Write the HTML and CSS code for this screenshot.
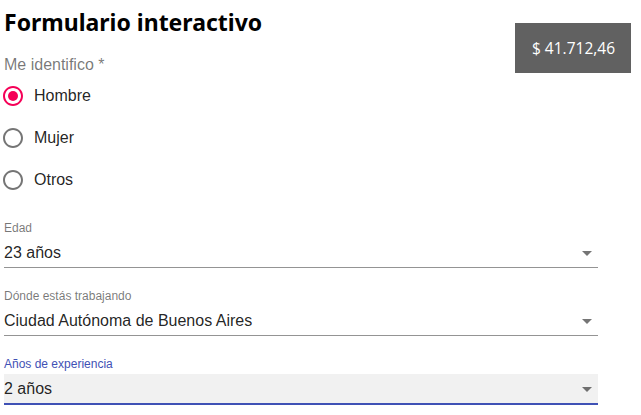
FILE: index.html
```html
<!DOCTYPE html>
<html lang="es">
<head>
<meta charset="utf-8">
<link rel="stylesheet" href="styles.css">
</head>
<body>
<div class="page">
  <div class="main">
    <h1 class="title">Formulario interactivo</h1>
    <div class="group-label">Me identifico *</div>
    <div class="radios">
      <label class="radio-row">
        <span class="radio-icon checked">
          <svg viewBox="0 0 24 24" width="24" height="24"><path d="M12 2C6.48 2 2 6.480 2 12s4.48 10 10 10 10-4.48 10-10S17.52 2 12 2zm0 18c-4.42 0-8-3.58-8-8s3.58-8 8-8 8 3.58 8 8-3.58 8-8 8z"/><circle cx="12" cy="12" r="5"/></svg>
        </span>
        <span class="radio-text">Hombre</span>
      </label>
      <label class="radio-row">
        <span class="radio-icon">
          <svg viewBox="0 0 24 24" width="24" height="24"><path d="M12 2C6.48 2 2 6.48 2 12s4.48 10 10 10 10-4.48 10-10S17.52 2 12 2zm0 18c-4.42 0-8-3.58-8-8s3.58-8 8-8 8 3.58 8 8-3.58 8-8 8z"/></svg>
        </span>
        <span class="radio-text">Mujer</span>
      </label>
      <label class="radio-row">
        <span class="radio-icon">
          <svg viewBox="0 0 24 24" width="24" height="24"><path d="M12 2C6.48 2 2 6.48 2 12s4.48 10 10 10 10-4.48 10-10S17.52 2 12 2zm0 18c-4.42 0-8-3.58-8-8s3.58-8 8-8 8 3.58 8 8-3.58 8-8 8z"/></svg>
        </span>
        <span class="radio-text">Otros</span>
      </label>
    </div>
    <div class="fields">
      <div class="field">
        <div class="field-label">Edad</div>
        <div class="field-box">
          <span class="field-value">23 años</span>
          <svg class="arrow" viewBox="0 0 24 24" width="24" height="24"><path d="M7 10l5 5 5-5z"/></svg>
        </div>
      </div>
      <div class="field">
        <div class="field-label">Dónde estás trabajando</div>
        <div class="field-box">
          <span class="field-value">Ciudad Autónoma de Buenos Aires</span>
          <svg class="arrow" viewBox="0 0 24 24" width="24" height="24"><path d="M7 10l5 5 5-5z"/></svg>
        </div>
      </div>
      <div class="field focused">
        <div class="field-label">Años de experiencia</div>
        <div class="field-box">
          <span class="field-value">2 años</span>
          <svg class="arrow" viewBox="0 0 24 24" width="24" height="24"><path d="M7 10l5 5 5-5z"/></svg>
        </div>
      </div>
    </div>
  </div>
  <div class="side">
    <div class="price">$ 41.712,46</div>
  </div>
</div>
</body>
</html>
```
FILE: styles.css
```css
html, body {
  margin: 0;
  padding: 0;
  background: #ffffff;
}
body {
  font-family: "Liberation Sans", Arial, sans-serif;
  color: rgba(0, 0, 0, 0.87);
}
.page {
  display: flex;
  padding: 0 10px 0 4px;
  gap: 20px;
}
.main {
  width: 594px;
  flex: none;
}
.side {
  flex: 1;
  display: flex;
  justify-content: flex-end;
  padding-top: 23px;
}
.price {
  background: #616161;
  color: #ffffff;
  font-family: "Open Sans", sans-serif;
  font-size: 15.5px;
  height: 50px;
  line-height: 50px;
  padding: 0 16px 0 17px;
  white-space: nowrap;
  margin-left: -200px;
}
.title {
  margin: 0;
  padding-top: 6px;
  font-family: "Noto Sans", sans-serif;
  font-weight: 700;
  font-size: 23px;
  line-height: 32px;
  color: #000000;
  height: 48px;
}
.group-label {
  font-size: 16px;
  line-height: 20px;
  color: rgba(0, 0, 0, 0.54);
  margin-top: 1px;
}
.radios {
  display: flex;
  flex-direction: column;
  margin-left: -3px;
}
.radio-row {
  display: flex;
  align-items: center;
  height: 42px;
  gap: 9px;
}
.radio-icon {
  display: flex;
  width: 24px;
  height: 24px;
  fill: rgba(0, 0, 0, 0.54);
}
.radio-icon.checked {
  fill: #f50057;
}
.radio-text {
  font-size: 16px;
  color: rgba(0, 0, 0, 0.87);
}
.fields {
  display: flex;
  flex-direction: column;
  gap: 21px;
  margin-top: 20px;
}
.field-label {
  font-size: 12px;
  line-height: 14px;
  color: rgba(0, 0, 0, 0.54);
  margin-bottom: 3px;
}
.field-box {
  height: 29px;
  display: flex;
  align-items: center;
  justify-content: space-between;
  border-bottom: 1px solid #949494;
}
.field-value {
  font-size: 16px;
  color: rgba(0, 0, 0, 0.87);
}
.arrow {
  fill: rgba(0, 0, 0, 0.54);
  margin-right: -1px;
}
.focused .field-label {
  color: #3f51b5;
}
.focused .field-box {
  background: #f1f1f1;
  border-bottom: 2px solid #3f51b5;
}
```
